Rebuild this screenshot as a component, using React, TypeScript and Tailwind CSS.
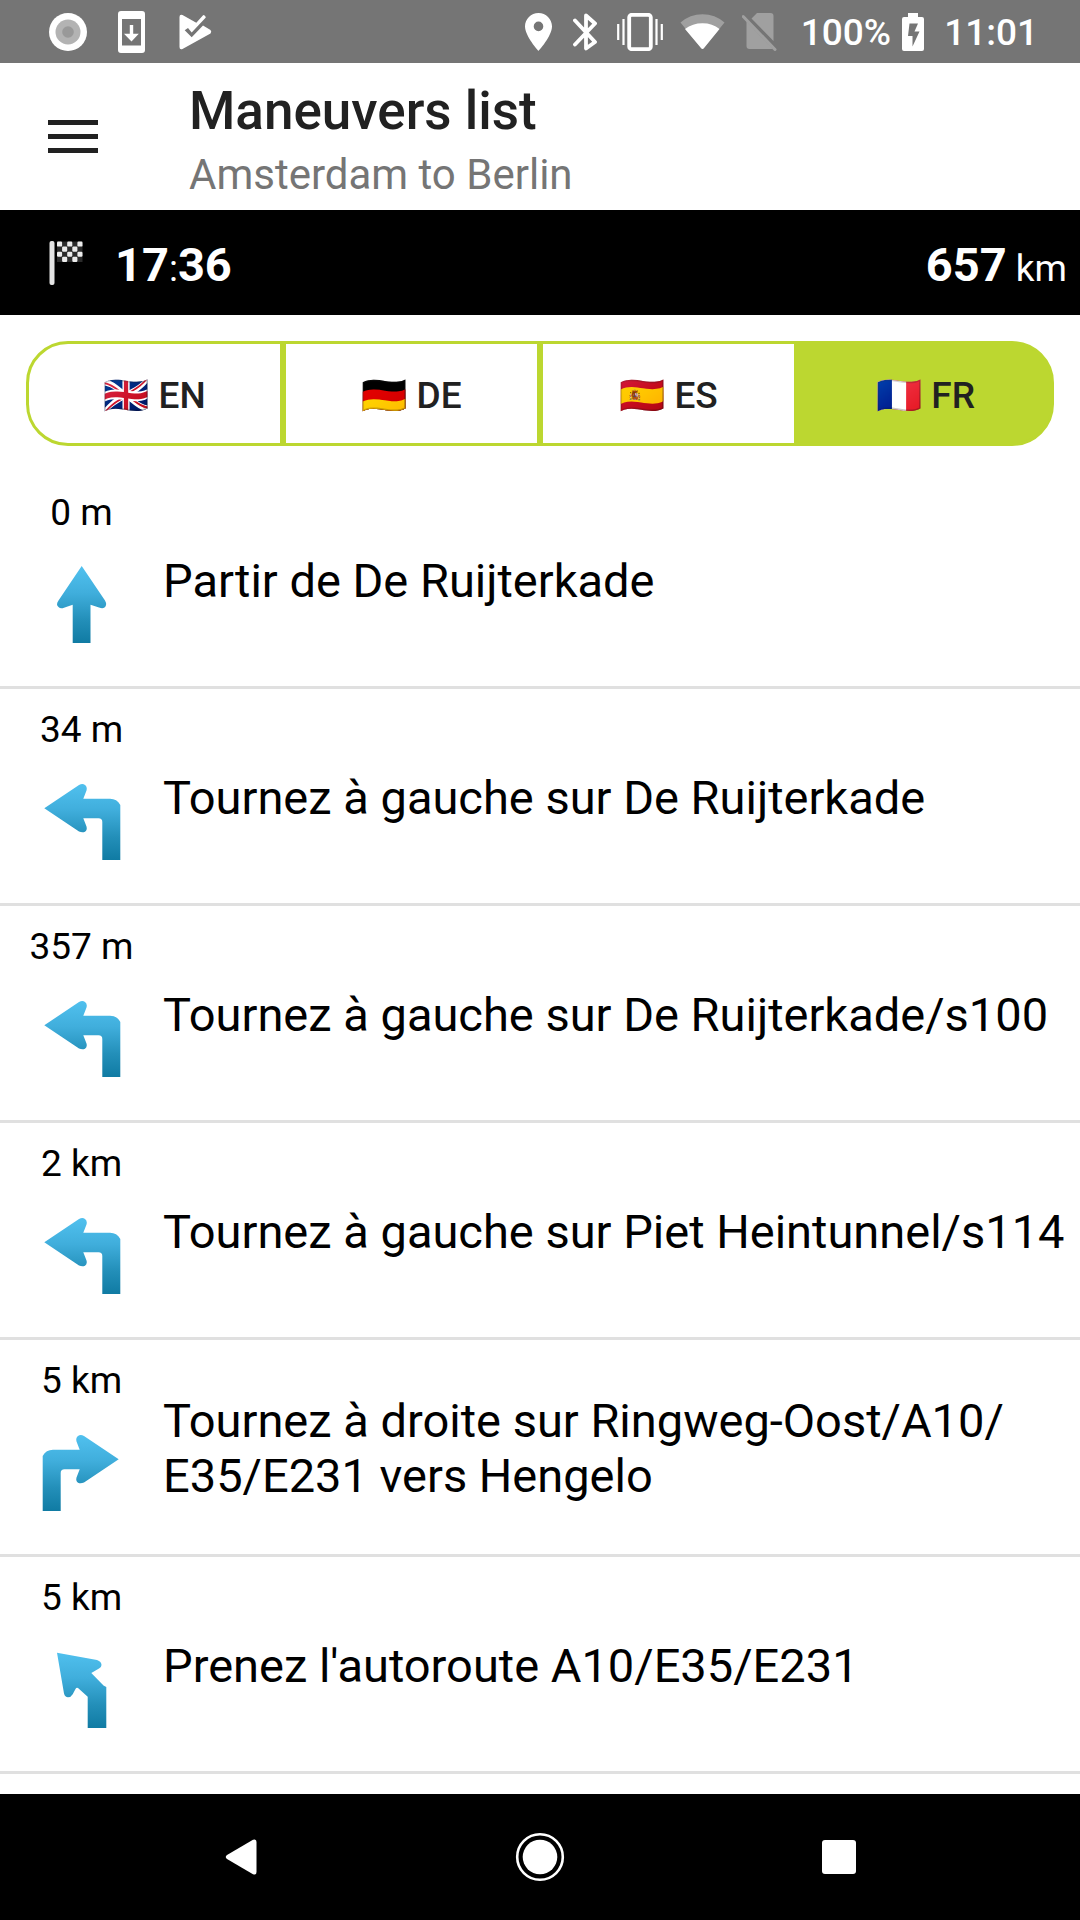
import { Fragment, useState } from "react";

type Direction = "straight" | "left" | "right" | "slight-left";

const languages = [
  { code: "EN", flag: "🇬🇧" },
  { code: "DE", flag: "🇩🇪" },
  { code: "ES", flag: "🇪🇸" },
  { code: "FR", flag: "🇫🇷" },
];

const maneuvers: { distance: string; direction: Direction; text: string }[] = [
  { distance: "0 m", direction: "straight", text: "Partir de De Ruijterkade" },
  { distance: "34 m", direction: "left", text: "Tournez à gauche sur De Ruijterkade" },
  { distance: "357 m", direction: "left", text: "Tournez à gauche sur De Ruijterkade/s100" },
  { distance: "2 km", direction: "left", text: "Tournez à gauche sur Piet Heintunnel/s114" },
  { distance: "5 km", direction: "right", text: "Tournez à droite sur Ringweg-Oost/A10/E35/E231 vers Hengelo" },
  { distance: "5 km", direction: "slight-left", text: "Prenez l'autoroute A10/E35/E231" },
];

const arrowPaths: Record<Direction, string> = {
  straight:
    "M40.7 2 L64 36.5 Q66.5 41 63.5 43.5 Q61.5 45 58 43.5 L49.5 40.7 V79 H31.7 V40.7 L23 43.7 Q19.5 45 17.5 43 Q14.5 40.5 17.5 36.5 Z",
  left:
    "M3.3 27.3 L38 4 Q41.5 2 44 4 Q46.5 6 45.5 9.5 L42.3 17.7 H69 Q76 17.7 79.3 24 V79 H61.3 V41 Q61.3 37.3 57.5 37.3 H42.3 L45.5 45.5 Q46.5 49 44 50.7 Q41.5 52 38 50.5 Z",
  right:
    "M77.7 27.3 L43 4 Q39.5 2 37 4 Q34.5 6 35.5 9.5 L38.7 17.7 H12 Q5 17.7 1.7 24 V79 H19.7 V41 Q19.7 37.3 23.5 37.3 H38.7 L35.5 45.5 Q34.5 49 37 50.7 Q39.5 52 43 50.5 Z",
  "slight-left":
    "M16 3.7 L56 11 Q60.5 12.5 60.5 16 Q60.5 18 58 19.5 L50.3 24 L62.5 36.5 L65.3 38 V79 H46.7 V47.7 L37 39 Q35.5 38 34.5 40 L31.7 45.3 Q30 48.3 27 48.3 Q24 48.3 23 44.5 Z",
};

function ManeuverIcon({ direction }: { direction: Direction }) {
  return (
    <svg viewBox="0 0 82 82" className="size-[82px]" aria-hidden="true">
      <defs>
        <linearGradient id={`sky-${direction}`} gradientUnits="userSpaceOnUse" x1="0" y1="2" x2="0" y2="79">
          <stop offset="0" stopColor="#51c1ef" />
          <stop offset="0.35" stopColor="#40aedc" />
          <stop offset="0.7" stopColor="#238fb9" />
          <stop offset="1" stopColor="#107ba3" />
        </linearGradient>
      </defs>
      <path d={arrowPaths[direction]} fill={`url(#sky-${direction})`} />
    </svg>
  );
}

/* Road names may wrap after each slash. */
function Instruction({ text }: { text: string }) {
  return (
    <p className="flex-1 self-center pt-[2px] pr-[10px] text-[47px] leading-[55px]">
      {text.split("/").map((part, index) => (
        <Fragment key={index}>
          {index > 0 && (
            <>
              /<wbr />
            </>
          )}
          {part}
        </Fragment>
      ))}
    </p>
  );
}

function FinishFlag() {
  const cells = [
    [0, 0], [2, 0], [4, 0],
    [1, 1], [3, 1],
    [0, 2], [2, 2], [4, 2],
    [1, 3], [3, 3],
  ];
  return (
    <svg viewBox="0 0 34 46" className="h-[46px] w-[34px]" aria-hidden="true">
      <rect x="0.5" y="1" width="5" height="44" rx="2" fill="#e4e4e4" />
      <rect x="8" y="1.5" width="25.5" height="20.5" fill="#2b2b2b" />
      {cells.map(([x, y]) => (
        <rect key={`${x}-${y}`} x={8 + x * 5.1} y={1.5 + y * 5.1} width="5.1" height="5.1" rx="1.2" fill="#ececec" />
      ))}
    </svg>
  );
}

function StatusBar() {
  return (
    <div className="flex h-[63px] items-center justify-between bg-[#757575] pr-[42px] pl-[49px] text-white">
      <div className="flex items-center">
        <svg viewBox="0 0 38 40" className="h-[40px] w-[38px]" aria-hidden="true">
          <circle cx="19" cy="20" r="19" fill="#fff" />
          <circle cx="19" cy="20" r="12.5" fill="#b3b3b3" />
          <circle cx="19" cy="20" r="5.8" fill="#999" />
        </svg>
        <svg viewBox="0 0 27 42" className="ml-[31px] h-[42px] w-[27px]" aria-hidden="true">
          <path
            fill="#fff"
            fillRule="evenodd"
            d="M3 0H24Q27 0 27 3V39Q27 42 24 42H3Q0 42 0 39V3Q0 0 3 0Z M4 8V34.5H23V8Z"
          />
          <path fill="#fff" d="M11.8 14H15.2V22.8H20.8L13.5 30.5L6 22.8H11.8Z" />
        </svg>
        <svg viewBox="0 0 33 36" className="ml-[34px] h-[36px] w-[33px]" aria-hidden="true">
          <path
            fill="#fff"
            d="M0.5 3Q0.5 0 3.5 1L17.3 8.7L24.3 1Q26.6 1 26.8 3.6L12.7 18.5L9 14L5.7 16.3L12.7 23.3L24 11.6L31.5 16Q33 17.5 31.5 19.5L3.5 35Q0.5 36 0.5 33Z"
          />
        </svg>
      </div>
      <div className="flex items-center">
        <svg viewBox="0 0 27 38" className="h-[38px] w-[27px]" aria-hidden="true">
          <path
            fill="#fff"
            fillRule="evenodd"
            d="M13.5 0C6 0 0 6 0 13.3C0 23.3 13.5 38 13.5 38S27 23.3 27 13.3C27 6 21 0 13.5 0Z M13.5 8.6A4.8 4.8 0 1 1 13.5 18.2A4.8 4.8 0 1 1 13.5 8.6Z"
          />
        </svg>
        <svg viewBox="0 0 24 38" className="ml-[21px] h-[38px] w-[24px]" aria-hidden="true">
          <path
            d="M2 7.5L22 29L13 35.5V2.5L22 10.5L2 31.5"
            fill="none"
            stroke="#fff"
            strokeWidth="3.8"
            strokeLinecap="round"
            strokeLinejoin="round"
          />
        </svg>
        <svg viewBox="0 0 46 38" className="ml-[20px] h-[38px] w-[46px]" aria-hidden="true">
          <rect x="12.2" y="1.8" width="21.6" height="34.4" rx="2.5" fill="none" stroke="#fff" strokeWidth="3.8" />
          <path d="M1.2 11V27M6.5 6V32M39.5 6V32M44.8 11V27" stroke="#fff" strokeWidth="2.2" />
        </svg>
        <svg viewBox="0 0 45 36" className="ml-[17px] h-[36px] w-[45px]" aria-hidden="true">
          <path d="M0.5 8.5Q10 0.3 22.5 0.3T44.5 8.5L24 34Q22.5 36 21 34Z" fill="#a0a0a0" />
          <path d="M5 15Q12.5 9.2 22.5 9.2T39.5 15L24 34Q22.5 36 21 34Z" fill="#fff" />
        </svg>
        <svg viewBox="0 0 35 39" className="ml-[17px] h-[39px] w-[35px]" aria-hidden="true">
          <path
            d="M15 1H28.5Q31.5 1 31.5 4V29L9.5 6.5Z M4.5 9.5L30.5 36.5Q30 37 28.5 37H7.5Q4.5 37 4.5 34Z"
            fill="#a0a0a0"
          />
          <path d="M1.2 4.5L33 37.5" stroke="#a0a0a0" strokeWidth="3" strokeLinecap="round" />
        </svg>
        <span className="ml-6 pt-[3px] text-[37px] leading-[44px] font-medium">100%</span>
        <svg viewBox="0 0 22 38" className="ml-[11px] h-[38px] w-[22px]" aria-hidden="true">
          <path
            fill="#fff"
            fillRule="evenodd"
            d="M6 0H16V4H20Q22 4 22 6V36Q22 38 20 38H2Q0 38 0 36V6Q0 4 2 4H6Z M7.5 10.5L6 23H10.5V33.5L17.5 18.5H12.5L16 10.5Z"
          />
        </svg>
        <span className="ml-[20px] pt-[3px] text-[37px] leading-[44px] font-medium">11:01</span>
      </div>
    </div>
  );
}

export default function App() {
  const [language, setLanguage] = useState("FR");

  return (
    <div className="flex min-h-screen flex-col bg-white font-['Roboto',sans-serif] text-black">
      <StatusBar />

      <header className="flex h-[147px] items-center">
        <button type="button" aria-label="Menu" className="ml-[48px] flex h-[50px] w-[50px] flex-col justify-center gap-[9px]">
          <span className="h-[5px] w-full bg-[#212121]" />
          <span className="h-[5px] w-full bg-[#212121]" />
          <span className="h-[5px] w-full bg-[#212121]" />
        </button>
        <div className="ml-[91px] pt-3">
          <h1 className="text-[53px] leading-[64px] font-medium text-[#212121]">Maneuvers list</h1>
          <p className="text-[42px] leading-[64px] text-[#757575]">Amsterdam to Berlin</p>
        </div>
      </header>

      <div className="flex h-[105px] items-center justify-between bg-black pr-[13px] pl-[49px] text-white">
        <div className="flex items-center gap-8">
          <FinishFlag />
          <p className="pt-2 text-[37px] leading-[56px]">
            <b className="text-[47px] font-bold">17</b>:<b className="text-[47px] font-bold">36</b>
          </p>
        </div>
        <p className="pt-2 text-[37px] leading-[56px]">
          <b className="text-[47px] font-bold">657</b> km
        </p>
      </div>

      <div className="mx-[26px] my-[26px] flex h-[105px]">
        {languages.map(({ code, flag }) => (
          <button
            key={code}
            type="button"
            aria-pressed={language === code}
            onClick={() => setLanguage(code)}
            className={`flex-1 border-[3px] border-[#bcd730] pt-1 text-[37px] font-medium text-[#212121] first:rounded-l-[42px] last:rounded-r-[42px] ${
              language === code ? "bg-[#bcd730]" : "bg-white"
            }`}
          >
            {flag} {code}
          </button>
        ))}
      </div>

      <ul>
        {maneuvers.map(({ distance, direction, text }) => (
          <li key={text} className="flex min-h-[217px] border-b-[3px] border-[#e0e0e0]">
            <div className="flex w-[163px] shrink-0 flex-col items-center gap-[29px] pt-[19px]">
              <span className="text-[37px] leading-[44px]">{distance}</span>
              <ManeuverIcon direction={direction} />
            </div>
            <Instruction text={text} />
          </li>
        ))}
      </ul>

      <nav className="mt-auto flex h-[126px] items-center bg-black px-[91px]">
        <button type="button" aria-label="Back" className="flex h-full flex-1 items-center justify-center">
          <svg viewBox="0 0 32 36" className="h-[36px] w-[32px]">
            <path d="M28 0.8Q31.5 -0.5 31.5 3V33Q31.5 36.5 28 35.2L2 20Q-0.5 18 2 16Z" fill="#fff" />
          </svg>
        </button>
        <button type="button" aria-label="Home" className="flex h-full flex-1 items-center justify-center">
          <svg viewBox="0 0 50 50" className="size-[50px]">
            <circle cx="25" cy="25" r="22.8" fill="none" stroke="#fff" strokeWidth="2.6" />
            <circle cx="25" cy="25" r="17.3" fill="#fff" />
          </svg>
        </button>
        <button type="button" aria-label="Recent apps" className="flex h-full flex-1 items-center justify-center">
          <span className="size-[34px] rounded-[3px] bg-white" />
        </button>
      </nav>
    </div>
  );
}
